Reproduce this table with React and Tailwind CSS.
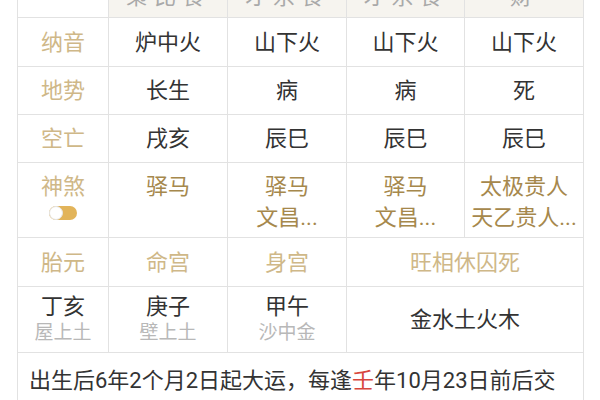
import React from "react";

const FONT = { fontFamily: '"Roboto", "Noto Sans CJK SC", sans-serif' };

const heads = ["", "枭比食", "才杀食", "才杀食", "财"];

const simpleRows = [
  ["纳音", "炉中火", "山下火", "山下火", "山下火"],
  ["地势", "长生", "病", "病", "死"],
  ["空亡", "戌亥", "辰巳", "辰巳", "辰巳"],
];

const shensha = [["驿马"], ["驿马", "文昌..."], ["驿马", "文昌..."], ["太极贵人", "天乙贵人..."]];

const gongs = [
  ["丁亥", "屋上土"],
  ["庚子", "壁上土"],
  ["甲午", "沙中金"],
];

const cell = "border border-[#e2e2e2] text-center align-middle";
const label = "text-[#cfb888]";

function Toggle() {
  return (
    <span className="mx-auto mt-[4px] flex h-[14px] w-[28px] items-center rounded-full bg-[#e2b45a]">
      <span className="h-[14px] w-[14px] rounded-full border border-[#e5e5e5] bg-white" />
    </span>
  );
}

export default function App() {
  return (
    <div className="h-[400px] w-[600px] overflow-hidden bg-white text-[22px] text-[#333]" style={FONT}>
      <table className="ml-[17px] w-[566px] table-fixed border-collapse">
        <colgroup>
          <col className="w-[91px]" />
          <col className="w-[119px]" />
          <col className="w-[119px]" />
          <col className="w-[118px]" />
          <col className="w-[119px]" />
        </colgroup>
        <tbody>
          <tr>
            {heads.map((h, i) => (
              <td key={i} className={`${cell} border-t-0 p-0 ${i ? "bg-[#f6f4ef]" : "bg-white"}`}>
                <div className="flex h-[17px] items-end justify-center overflow-hidden">
                  <span className="mb-[9px] leading-[22px] tracking-[6px] text-[#a9a9a9]">{h}</span>
                </div>
              </td>
            ))}
          </tr>
          {simpleRows.map((r, ri) => (
            <tr key={ri} className={ri === 0 ? "h-[49px]" : "h-[48px]"}>
              {r.map((c, i) => (
                <td key={i} className={`${cell} ${i === 0 ? label : ""}`}>
                  {c}
                </td>
              ))}
            </tr>
          ))}
          <tr className="h-[75px]">
            <td className={`${cell} !align-top pt-[8px] ${label}`}>
              <div className="leading-[31px]">神煞</div>
              <Toggle />
            </td>
            {shensha.map((items, i) => (
              <td key={i} className={`${cell} !align-top pt-[8px] text-[#a6884c]`}>
                {items.map((t) => (
                  <div key={t} className="whitespace-nowrap leading-[31px]">
                    {t}
                  </div>
                ))}
              </td>
            ))}
          </tr>
          <tr className={`h-[49px] ${label}`}>
            <td className={cell}>胎元</td>
            <td className={cell}>命宫</td>
            <td className={cell}>身宫</td>
            <td className={cell} colSpan={2}>
              旺相休囚死
            </td>
          </tr>
          <tr className="h-[66px]">
            {gongs.map(([a, b]) => (
              <td key={a} className={cell}>
                <div className="leading-[26px]">{a}</div>
                <div className="text-[19px] leading-[26px] text-[#b8b8b8]">{b}</div>
              </td>
            ))}
            <td className={cell} colSpan={2}>
              金水土火木
            </td>
          </tr>
          <tr>
            <td colSpan={5} className="border border-b-0 border-[#e2e2e2] pl-[11px] pt-[13px] pb-[20px] text-left leading-[30px] whitespace-nowrap">
              出生后6年2个月2日起大运，每逢<span className="text-[#d8463c]">壬</span>年10月23日前后交
            </td>
          </tr>
        </tbody>
      </table>
    </div>
  );
}
